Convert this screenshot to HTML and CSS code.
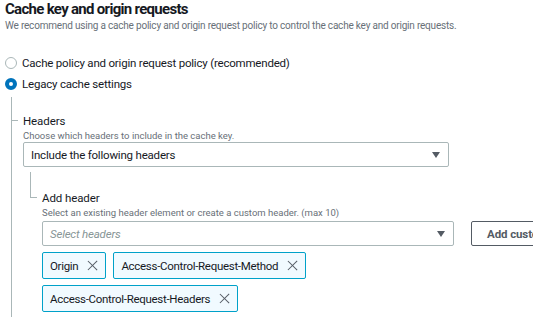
FILE: index.html
```html
<!DOCTYPE html>
<html lang="en">
<head>
  <meta charset="UTF-8">
  <title>Cache key and origin requests</title>
  <link rel="stylesheet" href="styles.css">
</head>
<body>

  <h1>Cache key and origin requests</h1>
  <p class="desc">We recommend using a cache policy and origin request policy to control the cache key and origin requests.</p>

  <div class="radios">
    <label class="radio">
      <span class="dot"></span>
      Cache policy and origin request policy (recommended)
    </label>
    <label class="radio checked">
      <span class="dot"></span>
      Legacy cache settings
    </label>
  </div>

  <div class="legacy">
    <div class="field">
      <div class="field-label">Headers</div>
      <div class="field-hint">Choose which headers to include in the cache key.</div>
      <div class="select">
        <span>Include the following headers</span>
        <span class="caret"></span>
      </div>
    </div>

    <div class="sub">
      <div class="field">
        <div class="field-label">Add header</div>
        <div class="field-hint">Select an existing header element or create a custom header. (max 10)</div>
        <div class="row">
          <div class="select input">
            <span class="placeholder">Select headers</span>
            <span class="caret"></span>
          </div>
          <button class="btn">Add custom header</button>
        </div>
        <div class="tokens">
          <span class="token">Origin <span class="x"></span></span>
          <span class="token">Access-Control-Request-Method <span class="x"></span></span>
          <span class="token">Access-Control-Request-Headers <span class="x"></span></span>
        </div>
      </div>
    </div>
  </div>

</body>
</html>
```

FILE: styles.css
```css
* {
  box-sizing: border-box;
  margin: 0;
  padding: 0;
}

body {
  background: white;
  font-family: Roboto, "Noto Sans", Arial, sans-serif;
  color: #16191f;
  padding: 0 0 0 5px;
  overflow: hidden;
  width: 533px;
  height: 317px;
  display: flex;
  flex-direction: column;
}

h1 {
  font-size: 15px;
  letter-spacing: -0.7px;
  font-weight: bold;
  line-height: 18px;
}

.desc {
  font-size: 10px;
  letter-spacing: -0.2px;
  color: #687078;
  line-height: 14px;
  margin-top: 1px;
}

.radios {
  margin-top: 22px;
  display: flex;
  flex-direction: column;
  gap: 5px;
}

.radio {
  display: flex;
  align-items: center;
  gap: 5px;
  font-size: 11.5px;
  letter-spacing: -0.2px;
  line-height: 16px;
}

.dot {
  width: 12px;
  height: 12px;
  border-radius: 50%;
  border: 1px solid #aab7b8;
  background: white;
}

.radio.checked .dot {
  border: 4px solid #0073bb;
}

.legacy {
  flex: 1;
  margin-left: 6px;
  margin-top: 5px;
  border-left: 1px solid #aab7b8;
  padding-left: 11px;
  padding-top: 16px;
}

.field {
  position: relative;
}

.field-label {
  font-size: 11.5px;
  letter-spacing: -0.1px;
  line-height: 16px;
}

.legacy > .field > .field-label::before {
  content: "";
  position: absolute;
  left: -11px;
  top: 7px;
  width: 6px;
  border-top: 1px solid #aab7b8;
}

.field-hint {
  font-size: 9.5px;
  color: #687078;
  line-height: 13px;
}

.select {
  width: 426px;
  height: 25px;
  border: 1px solid #aab7b8;
  border-radius: 2px;
  display: flex;
  align-items: center;
  justify-content: space-between;
  padding: 0 8px 0 7px;
  font-size: 11.5px;
  letter-spacing: -0.2px;
}

.caret {
  width: 0;
  height: 0;
  border-left: 4px solid transparent;
  border-right: 4px solid transparent;
  border-top: 6px solid #545b64;
}

.sub {
  margin-left: 7px;
  margin-top: 5px;
  padding-top: 18px;
  padding-left: 12px;
  position: relative;
}

.sub::before {
  content: "";
  position: absolute;
  left: 0;
  top: 0;
  width: 6px;
  height: 25px;
  border-left: 1px solid #aab7b8;
  border-bottom: 1px solid #aab7b8;
}

.row {
  display: flex;
  gap: 17px;
  margin-top: 2px;
  overflow: hidden;
}

.row .select {
  width: 412px;
  flex-shrink: 0;
}

.placeholder {
  font-style: italic;
  color: #879596;
}

.btn {
  height: 25px;
  width: 140px;
  flex-shrink: 0;
  border: 1px solid #545b64;
  border-radius: 2px;
  background: white;
  color: #545b64;
  font-family: inherit;
  font-weight: bold;
  font-size: 11.5px;
  letter-spacing: -0.1px;
  text-align: left;
  padding-left: 15px;
}

.tokens {
  display: flex;
  flex-wrap: wrap;
  gap: 6px 7px;
  margin-top: 6px;
  width: 300px;
}

.token {
  display: flex;
  align-items: center;
  gap: 9px;
  height: 27px;
  border: 1px solid #00a1c9;
  border-radius: 2px;
  background: #f1faff;
  padding: 0 7px;
  font-size: 11.5px;
  letter-spacing: -0.3px;
}

.x {
  position: relative;
  width: 11px;
  height: 11px;
}

.x::before,
.x::after {
  content: "";
  position: absolute;
  left: 5px;
  top: -1px;
  width: 1.3px;
  height: 13px;
  background: #545b64;
  transform: rotate(45deg);
}

.x::after {
  transform: rotate(-45deg);
}
```
